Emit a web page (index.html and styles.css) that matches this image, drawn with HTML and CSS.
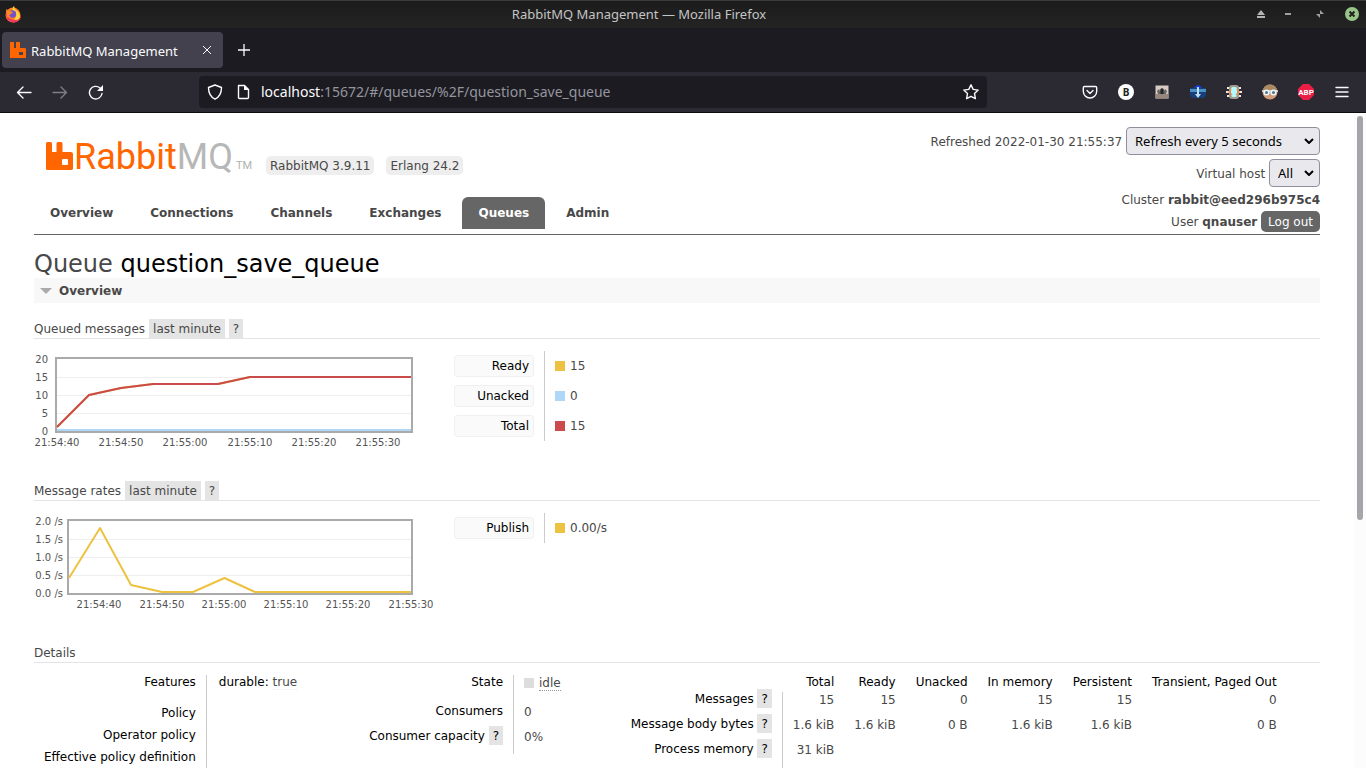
FILE: index.html
```html
<!DOCTYPE html>
<html lang="en">
<head>
<meta charset="utf-8">
<title>RabbitMQ Management</title>
<link rel="stylesheet" href="styles.css">
</head>
<body>
<div class="titlebar">
  <svg class="fox" width="18" height="18" viewBox="0 0 18 18" aria-hidden="true"><circle cx="9" cy="10" r="7.5" fill="#ff7a25"/><path d="M2 6C1 13 5 17.500 10 17.500c4 0 7-3 7-7l-2 3c-4 3-9 1-11-2z" fill="#f5365c"/><path d="M10 1c1 2 0 3 2 4 3 2 4 4 4 7-1 3-4 4-6 2 3-2 3-6 0-7C8 6 8 3 10 1z" fill="#ffd73b"/><circle cx="8.500" cy="9" r="3.700" fill="#7452c8"/><path d="M2 4l3 2 4 1-2 2-2 1 2 3-4-1z" fill="#ff8a22"/></svg>
  <span class="window-title">RabbitMQ Management — Mozilla Firefox</span>
  <div class="window-buttons">
    <button aria-label="Shade"><svg width="14" height="14" viewBox="0 0 14 14"><path d="M3 8l4-5 4 5zM3 9h8v2H3z" fill="#b4b4b4"/></svg></button>
    <button aria-label="Minimize"><svg width="14" height="14" viewBox="0 0 14 14"><path d="M4 6h6v2H4z" fill="#a0a0a0"/></svg></button>
    <button aria-label="Restore"><svg width="14" height="14" viewBox="0 0 14 14"><path d="M7 3v4h4zM3 7h4v4z" fill="#a0a0a0"/></svg></button>
    <button aria-label="Close window"><svg width="14" height="14" viewBox="0 0 14 14"><circle cx="7" cy="7" r="7" fill="#98c689"/><path d="M4.500 4.500l5 5m0-5l-5 5" stroke="#222" stroke-width="2"/></svg></button>
  </div>
</div>
<div class="tabstrip">
  <div class="tab">
    <svg width="16" height="16" viewBox="0 0 16 16" aria-hidden="true"><path d="M0 0h4v6h2V0h4v6h5l1 1v9H0z" fill="#f60"/><path d="M9 10h4v3H9z" fill="#42414d"/></svg>
    <span class="tab-title">RabbitMQ Management</span>
    <button aria-label="Close tab"><svg width="12" height="12" viewBox="0 0 12 12"><path d="M2 2l8 8m0-8l-8 8" stroke="#fbfbfe"/></svg></button>
  </div>
  <button aria-label="New tab"><svg width="14" height="14" viewBox="0 0 14 14"><path d="M7 1v12M1 7h12" stroke="#fbfbfe" stroke-width="1.300"/></svg></button>
</div>
<div class="navbar">
  <div class="nav-buttons">
    <button aria-label="Back"><svg width="16" height="16" viewBox="0 0 16 16"><path d="M15 8.500H1.500M7 3L1.500 8.500 7 14" class="line"/></svg></button>
    <button aria-label="Forward" disabled><svg width="16" height="16" viewBox="0 0 16 16"><path d="M1 8.500h13.500M9 3l5.500 5.500L9 14" class="line"/></svg></button>
    <button aria-label="Reload"><svg width="16" height="16" viewBox="0 0 16 16"><path d="M14 9.500a6.300 6.300 0 1 1-2-5.500" class="line"/><path d="M15 1v6H9z" fill="#fbfbfe"/></svg></button>
  </div>
  <div class="urlbar">
    <svg width="16" height="16" viewBox="0 0 16 16" aria-hidden="true"><path d="M8 1l6.500 2.500c0 6-2 9.500-6.500 11.700C3.500 13 1.500 9.500 1.500 3.500z" class="line"/></svg>
    <svg width="16" height="16" viewBox="0 0 16 16" aria-hidden="true"><path d="M3.500 1.500h6l4 4v8q0 1-1 1h-8q-1 0-1-1v-11q0-1 1-1z" class="line"/><path d="M9 1v5h5z" fill="#fbfbfe"/></svg>
    <span class="url"><b>localhost</b>:15672/#/queues/%2F/question_save_queue</span>
    <button aria-label="Bookmark this page"><svg width="16" height="16" viewBox="0 0 16 16"><path d="M8 .8l2.200 4.600 5 .7-3.700 3.500.9 5L8 12.300l-4.400 2.300.9-5L.8 6.100l5-.7z" class="line"/></svg></button>
  </div>
  <div class="extensions">
    <button aria-label="Pocket"><svg width="16" height="16" viewBox="0 0 16 16"><path d="M2.500 2.500h11q1.200 0 1.200 1.200v3.600a6.700 6.700 0 0 1-13.400 0V3.700q0-1.200 1.200-1.200z" class="line"/><path d="M5 6.500l3 3 3-3" class="line"/></svg></button>
    <button aria-label="Extension B"><svg width="16" height="16" viewBox="0 0 16 16"><circle cx="8" cy="8" r="8" fill="#fff"/><text x="8" y="11.500" class="b-mark">B</text></svg></button>
    <button aria-label="Extension"><svg width="16" height="16" viewBox="0 0 16 16"><path d="M1.500 1.500h13v13h-13z" fill="#d6cbc5"/><path d="M1.500 10h13v4.500h-13z" fill="#96867c"/><path d="M3 7l2-2 1 2 1-3h2l1 3 1-2 2 2-1 3H4z" fill="#666"/><path d="M6.500 5h3v5h-3z" fill="#292726"/></svg></button>
    <button aria-label="Downloader"><svg width="16" height="16" viewBox="0 0 16 16"><path d="M0 4h16v7l-2 3H2l-2-3z" fill="#173f78"/><path d="M0 5h16v3H0z" fill="#4c91c4"/><path d="M4 4q4-6 8 0z" fill="#173de0"/><path d="M7 3h2v7h2l-3 4-3-4h2z" fill="#bce1f7"/></svg></button>
    <button aria-label="Extension"><svg width="16" height="16" viewBox="0 0 16 16"><path d="M1 4h4M0 8h4M1 12h4m6-8h4m-3 4h4m-5 4h4" stroke="#eee8dd" stroke-width="2"/><rect x="3" y="1" width="10" height="14" rx="3" fill="#a39a8d"/><rect x="5" y="3" width="6" height="10" rx="2" fill="#b0fbff"/><path d="M5 5l-2 3 3 3m5-6l2 3-3 3" fill="none" stroke="#e98955" stroke-width="1.500"/></svg></button>
    <button aria-label="Extension"><svg width="16" height="16" viewBox="0 0 16 16"><circle cx="8" cy="8" r="7.500" fill="#d39b78"/><path d="M.5 8a7.500 7.500 0 0 1 15 0z" fill="#a88962"/><path d="M0 7h16" stroke="#dcecf2" stroke-width="1.500"/><circle cx="4.500" cy="8.500" r="2.300" fill="#54768b" stroke="#eef8fc" stroke-width="1.500"/><circle cx="11.500" cy="8.500" r="2.300" fill="#54768b" stroke="#eef8fc" stroke-width="1.500"/></svg></button>
    <button aria-label="Adblock Plus"><svg width="16" height="16" viewBox="0 0 16 16"><path d="M5 0h6l5 5v6l-5 5H5l-5-5V5z" fill="#ed1e45"/><text x="8" y="11" class="abp">ABP</text></svg></button>
    <button aria-label="Menu"><svg width="16" height="16" viewBox="0 0 16 16"><path d="M2 3.500h12M2 8h12M2 12.500h12" class="line"/></svg></button>
  </div>
</div>
<div class="viewport">
<div class="page">
  <header>
    <div class="brand">
      <div class="brand-row">
        <a href="#/" class="logo" aria-label="RabbitMQ">
          <svg width="206" height="46" viewBox="0 -6 206 46">
            <path d="M1.500 2h3q1.500 0 1.500 1.500V12h4.500V3.500Q10.500 2 12 2h3q1.500 0 1.500 1.500V12H25q2 0 2 2v14.500q0 1.500-1.500 1.500h-24Q0 30 0 28.500v-25Q0 2 1.500 2z" fill="#f60"/><rect x="16" y="19" width="6" height="6" rx="1" fill="#fff"/>
            <text x="28" y="29" class="wordmark">Rabbit<tspan class="mq">MQ</tspan></text><text x="190" y="29" class="tm">TM</text>
          </svg>
        </a>
        <span class="version">RabbitMQ 3.9.11</span>
        <span class="version">Erlang 24.2</span>
      </div>
      <nav>
        <a href="#/">Overview</a><a href="#/connections">Connections</a><a href="#/channels">Channels</a><a href="#/exchanges">Exchanges</a><a href="#/queues" class="selected">Queues</a><a href="#/users">Admin</a>
      </nav>
    </div>
    <div class="status">
      <div><label for="refresh">Refreshed 2022-01-30 21:55:37</label> <span class="select"><select id="refresh" class="wide"><option>Refresh every 5 seconds</option></select><svg width="10" height="6" viewBox="0 0 10 6"><path d="M1 1l4 4 4-4"/></svg></span></div>
      <div><label for="vhost">Virtual host</label> <span class="select"><select id="vhost"><option>All</option></select><svg width="10" height="6" viewBox="0 0 10 6"><path d="M1 1l4 4 4-4"/></svg></span></div>
      <div class="plain">Cluster <b>rabbit@eed296b975c4</b></div>
      <div class="user">User <b>qnauser</b> <button>Log out</button></div>
    </div>
  </header>
  <main>
    <h1>Queue <b>question_save_queue</b></h1>
    <h2><svg width="12" height="6" viewBox="0 0 12 6" aria-hidden="true"><path d="M0 0h12L6 6z" fill="#aaa"/></svg>Overview</h2>
    <h3>Queued messages <button class="tag">last minute</button> <button class="tag">?</button></h3>
    <div class="chart-row">
      <svg class="chart" width="410" height="104" viewBox="0 0 410 104" role="img" aria-label="Queued messages">
        <path d="M23 26.500h355M23 44.500h355M23 62.500h355" class="grid"/>
        <rect x="22" y="7" width="356" height="74" class="frame"/>
        <path d="M23 79h354" class="blue"/>
        <path d="M23 76L55 44 87 37 119 33H184L216 26H377" class="yellow"/>
        <path d="M23 76L55 44 87 37 119 33H184L216 26H377" class="red"/>
        <g class="y"><text x="14" y="12">20</text><text x="14" y="30">15</text><text x="14" y="48">10</text><text x="14" y="66">5</text><text x="14" y="84">0</text></g>
        <g class="x"><text x="23" y="95">21:54:40</text><text x="87" y="95">21:54:50</text><text x="151" y="95">21:55:00</text><text x="216" y="95">21:55:10</text><text x="280" y="95">21:55:20</text><text x="344" y="95">21:55:30</text></g>
      </svg>
      <table class="legend">
        <tr><th scope="row"><span>Ready</span></th><td><i class="ready"></i>15</td></tr>
        <tr><th scope="row"><span>Unacked</span></th><td><i class="unacked"></i>0</td></tr>
        <tr><th scope="row"><span>Total</span></th><td><i class="total"></i>15</td></tr>
      </table>
    </div>
    <h3>Message rates <button class="tag">last minute</button> <button class="tag">?</button></h3>
    <div class="chart-row">
      <svg class="chart" width="410" height="104" viewBox="0 0 410 104" role="img" aria-label="Message rates">
        <path d="M35 26.500h343M35 44.500h343M35 62.500h343" class="grid"/>
        <rect x="34" y="7" width="344" height="74" class="frame"/>
        <path d="M35 65L66 15 97 72 128 79H159L190.500 65 221 79H377" class="yellow"/>
        <g class="y"><text x="29" y="12">2.0 /s</text><text x="29" y="30">1.5 /s</text><text x="29" y="48">1.0 /s</text><text x="29" y="66">0.5 /s</text><text x="29" y="84">0.0 /s</text></g>
        <g class="x"><text x="65" y="95">21:54:40</text><text x="128" y="95">21:54:50</text><text x="190" y="95">21:55:00</text><text x="252" y="95">21:55:10</text><text x="314" y="95">21:55:20</text><text x="377" y="95">21:55:30</text></g>
      </svg>
      <table class="legend">
        <tr><th scope="row"><span>Publish</span></th><td><i class="ready"></i>0.00/s</td></tr>
      </table>
    </div>
    <h3>Details</h3>
    <div class="details">
      <table class="facts policy">
        <tr><th scope="row">Features</th><td><b>durable:</b> <abbr class="faint">true</abbr></td></tr>
        <tr><th scope="row">Policy</th><td></td></tr>
        <tr><th scope="row">Operator policy</th><td></td></tr>
        <tr><th scope="row">Effective policy definition</th><td></td></tr>
      </table>
      <table class="facts state">
        <tr><th scope="row">State</th><td><i class="idle"></i><abbr>idle</abbr></td></tr>
        <tr><th scope="row">Consumers</th><td>0</td></tr>
        <tr><th scope="row">Consumer capacity <button class="tag">?</button></th><td>0%</td></tr>
      </table>
      <table class="facts stats">
        <tr><td class="corner"></td><th scope="col">Total</th><th scope="col">Ready</th><th scope="col">Unacked</th><th scope="col">In memory</th><th scope="col">Persistent</th><th scope="col">Transient, Paged Out</th></tr>
        <tr><th scope="row">Messages <button class="tag">?</button></th><td>15</td><td>15</td><td>0</td><td>15</td><td>15</td><td>0</td></tr>
        <tr><th scope="row">Message body bytes <button class="tag">?</button></th><td>1.6 kiB</td><td>1.6 kiB</td><td>0 B</td><td>1.6 kiB</td><td>1.6 kiB</td><td>0 B</td></tr>
        <tr><th scope="row">Process memory <button class="tag">?</button></th><td>31 kiB</td><td></td><td></td><td></td><td></td><td></td></tr>
      </table>
    </div>
  </main>
</div>
<div class="scrollbar"><div class="thumb"></div></div>
</div>
</body>
</html>
```
FILE: styles.css
```css
* { box-sizing: border-box; }
body {
  margin: 0;
  height: 100vh;
  display: flex;
  flex-direction: column;
  overflow: hidden;
  background: #fff;
  color: #484848;
  font: 12px/14px "DejaVu Sans", sans-serif;
}
button { border: 0; padding: 0; background: none; color: inherit; font: inherit; }
svg { display: block; flex: none; }
a { color: inherit; text-decoration: none; }
.line { fill: none; stroke: #fbfbfe; stroke-width: 1.4; stroke-linecap: round; stroke-linejoin: round; }

/* Browser window */
.titlebar, .tabstrip, .navbar { flex: none; display: flex; align-items: center; font-family: "Noto Sans", sans-serif; }
.titlebar {
  height: 28px;
  padding: 0 7px 2px 4px;
  border-top: 1px solid #3b3b3b;
  background: linear-gradient(#1b1b1b, #242424);
  color: #c4c4c4;
}
.window-title { flex: 1; padding-left: 2px; text-align: center; font-size: 13px; }
.window-buttons { display: flex; gap: 18px; }
.window-buttons button:first-child { margin-right: -5px; }
.tabstrip { height: 44px; padding: 0 2px; gap: 14px; background: #1c1b22; }
.tab {
  display: flex;
  align-items: center;
  width: 221px;
  height: 36px;
  padding: 0 10px 0 8px;
  gap: 5px;
  border-radius: 4px;
  background: #42414d;
  color: #fbfbfe;
}
.tab-title { flex: 1; padding-top: 2px; font-size: 13px; line-height: 20px; white-space: nowrap; }
.navbar { height: 41px; border-bottom: 1px solid #0c0c0d; background: #2b2a33; }
.nav-buttons { display: flex; gap: 20px; padding-left: 16px; }
.nav-buttons button:disabled { opacity: .4; }
.urlbar {
  flex: 1;
  display: flex;
  align-items: center;
  gap: 12px;
  height: 32px;
  margin: 0 95px;
  padding: 0 8px;
  border-radius: 4px;
  background: #1c1b22;
}
.url { flex: 1; margin-left: -2px; font-size: 14px; line-height: 20px; color: #95959e; }
.url b { font-weight: 400; color: #fbfbfe; }
.extensions { display: flex; gap: 20px; padding-right: 16px; }
.b-mark { font: bold 10px "Noto Sans", sans-serif; text-anchor: middle; fill: #222; }
.abp { font: bold 8px Roboto, sans-serif; text-anchor: middle; fill: #fff; }

/* Page and scrollbar */
.viewport { flex: 1; min-height: 0; display: flex; }
.page { flex: 1; min-width: 0; padding: 0 34px; overflow: hidden; }
.scrollbar { flex: none; width: 12px; padding: 3px; background: #fcfcfc; }
.thumb { height: 404px; border-radius: 3px; background: #a5a5aa; }

header { display: flex; justify-content: space-between; align-items: flex-end; padding-top: 14px; border-bottom: 1px solid #666; }
.brand-row { display: flex; align-items: flex-end; gap: 12px; padding: 0 0 22px 12px; }
.logo { margin: 0 2px -5px 0; }
.wordmark { font: 36px Roboto, sans-serif; fill: #f60; }
.mq { fill: #b7b7b7; }
.tm { font: 11px Roboto, sans-serif; fill: #b0b0b0; }
.version { padding: 3px 4px 2px; border-radius: 5px; background: #eee; }
nav { display: flex; gap: 5px; padding-bottom: 5px; }
nav a { padding: 9px 16px; border-radius: 6px 6px 0 0; font-weight: 700; }
nav a.selected { background: #666; color: #fff; }
.status { display: flex; flex-direction: column; gap: 4px; padding-bottom: 2px; text-align: right; }
.status .plain { padding-top: 2px; }
.select { position: relative; display: inline-block; }
.select select {
  appearance: none;
  height: 28px;
  padding: 0 25px 0 8px;
  border: 1px solid #8f8f9d;
  border-radius: 4px;
  background: #e9e9ed;
  color: #000;
  font: 13px "Noto Sans", sans-serif;
}
.select .wide { min-width: 194px; }
.select svg { position: absolute; right: 6px; top: 11px; pointer-events: none; }
.select path { fill: none; stroke: #000; stroke-width: 2; }
.user button { height: 21px; padding: 0 7px; border-radius: 5px; background: #666; color: #fff; }

h1 { margin: 15px 0 0; font-size: 24px; line-height: 28px; font-weight: 400; }
h1 b { font-weight: 400; color: #000; }
h2 { display: flex; align-items: center; gap: 7px; margin: 0 0 16px; padding: 6px 6px 5px; background: #f8f8f8; font-size: 12px; line-height: 14px; }
h3 { display: flex; align-items: center; gap: 4px; height: 20px; margin: 0; border-bottom: 1px solid #e4e4e4; font-size: 12px; line-height: 14px; font-weight: 400; }
.tag { margin: -3px 0 -2px; padding: 3px 4px 2px; background: #e4e4e4; line-height: 14px; }

.chart-row { display: flex; gap: 10px; padding: 12px 0 26px; }
.chart { font: 10px "DejaVu Sans", sans-serif; fill: #545454; }
.grid { stroke: #eee; }
.frame { fill: none; stroke: #aaa; stroke-width: 2; }
.x { text-anchor: middle; }
.y { text-anchor: end; }
.blue, .red, .yellow { fill: none; stroke-width: 2; stroke-linejoin: round; }
.blue { stroke: #afd8f8; }
.red { stroke: #cb4b4b; }
.yellow { stroke: #edc240; }

table { border-collapse: collapse; align-self: flex-start; }
th { font-weight: 400; color: #000; text-align: right; }
th, td { padding: 0; }
i { display: inline-block; width: 10px; height: 10px; margin-right: 5px; vertical-align: -1px; }
.ready { background: #edc240; }
.unacked { background: #afd8f8; }
.total { background: #cb4b4b; }
.idle { background: #ddd; }
.legend tr { height: 30px; }
.legend th { padding-right: 10px; }
.legend th span { display: block; width: 80px; padding: 3px 4px; border: 1px solid #f0f0f0; border-radius: 3px; background: #fafafa; }
.legend td { padding-left: 10px; border-left: 1px solid #ccc; }

.details { display: flex; padding-top: 12px; }
.facts th, .facts td { padding: 0 10px; vertical-align: top; white-space: nowrap; }
.facts td { border-left: 1px solid #ccc; }
.facts b { font-weight: 400; color: #000; }
.facts abbr { border-bottom: 1px dotted #999; }
.facts abbr.faint { border-color: #eee; }
.policy { margin-right: 52px; }
.facts.policy td { padding-left: 12px; }
.policy tr { height: 22px; }
.policy tr:first-child { height: 31px; }
.state { margin-right: 50px; }
.state tr { height: 25px; }
.state tr:first-child { height: 29px; }
.facts.state td, .facts.stats td { padding-top: 1px; }
.stats tr { height: 25px; }
.stats tr:first-child { height: 17px; }
.stats tr:last-child { height: 40px; }
.facts.stats td { border-left: 0; text-align: right; }
.stats th[scope=row] { border-right: 1px solid #ccc; }
```
